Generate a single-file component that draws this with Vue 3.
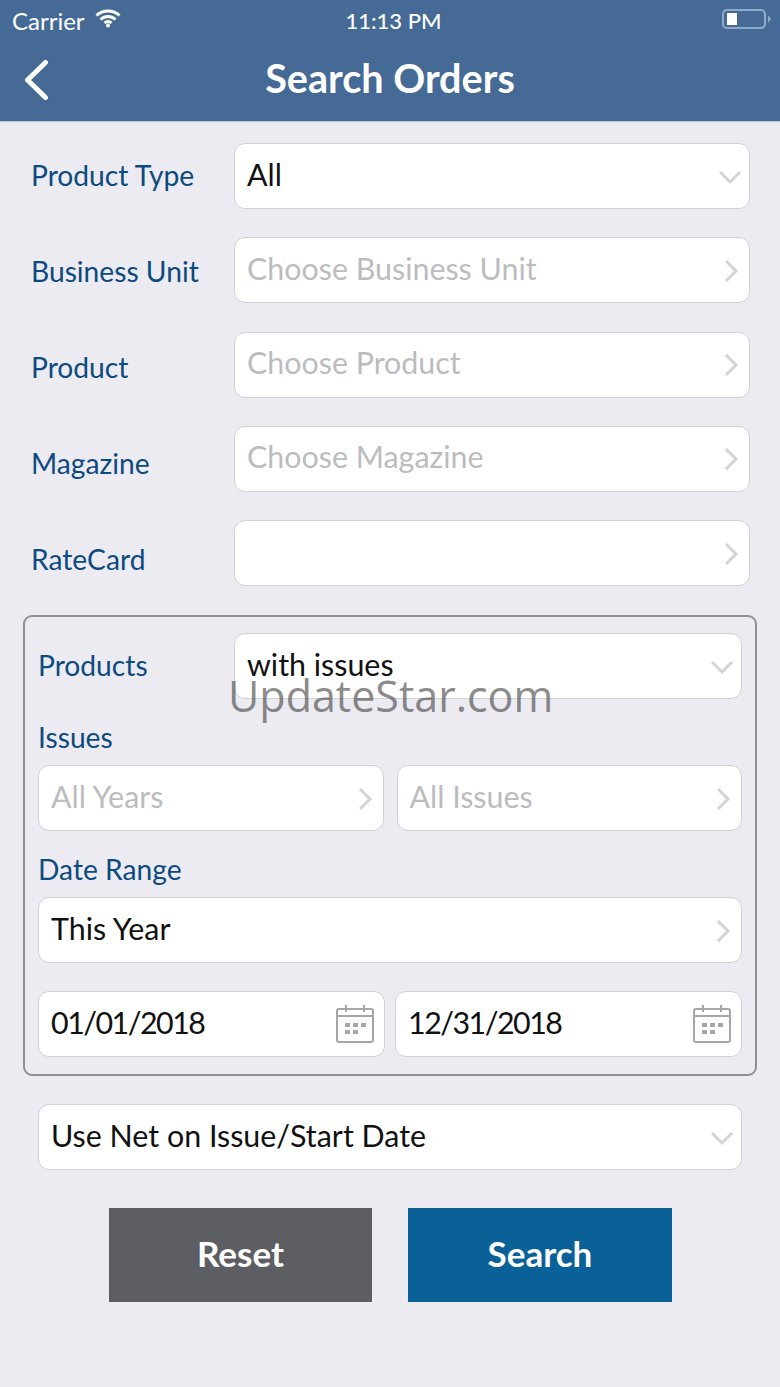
<template>
  <div class="page">
    <header class="top">
      <div class="status">
        <div class="status-left">
          <span>Carrier</span>
          <svg width="26" height="20" viewBox="0 0 26 20" class="wifi">
            <path d="M1.5 7.5C7.8 1.5 18.2 1.5 24.5 7.5" />
            <path d="M5.5 11.5C9.8 7.5 16.2 7.5 20.5 11.5" />
            <path d="M9.5 15C11.6 13.2 14.4 13.2 16.5 15" />
            <circle cx="13" cy="17.5" r="2" />
          </svg>
        </div>
        <div class="clock">11:13 PM</div>
        <div class="battery">
          <div class="battery-body"><div class="battery-fill"></div></div>
          <div class="battery-tip"></div>
        </div>
      </div>
      <div class="nav">
        <svg class="back" width="26" height="40" viewBox="0 0 26 40">
          <path d="M22.5 2.5L4.5 20L22.5 37.5" />
        </svg>
        <h1>Search Orders</h1>
      </div>
    </header>

    <main class="form">
      <section class="upper">
        <div class="labels">
          <label v-for="r in topRows" :key="r.label">{{ r.label }}</label>
        </div>
        <div class="fields">
          <div v-for="r in topRows" :key="r.label" class="field">
            <span :class="{ ph: r.placeholder }">{{ r.text }}</span>
            <svg v-if="r.icon === 'down'" class="ico down" viewBox="0 0 24 16"><path d="M2 3L12 13L22 3" /></svg>
            <svg v-else class="ico right" viewBox="0 0 16 24"><path d="M3 2L13 12L3 22" /></svg>
          </div>
        </div>
      </section>

      <section class="box">
        <div class="products-row">
          <label>Products</label>
          <div class="field grow">
            <span>with issues</span>
            <svg class="ico down" viewBox="0 0 24 16"><path d="M2 3L12 13L22 3" /></svg>
          </div>
        </div>

        <label class="sub issues-label">Issues</label>
        <div class="two">
          <div v-for="t in issues" :key="t" class="field">
            <span class="ph">{{ t }}</span>
            <svg class="ico right" viewBox="0 0 16 24"><path d="M3 2L13 12L3 22" /></svg>
          </div>
        </div>

        <label class="sub range-label">Date Range</label>
        <div class="field">
          <span>This Year</span>
          <svg class="ico right" viewBox="0 0 16 24"><path d="M3 2L13 12L3 22" /></svg>
        </div>

        <div class="dates">
          <div v-for="d in dates" :key="d" class="field">
            <span class="date-text">{{ d }}</span>
            <svg class="cal" width="38" height="40" viewBox="0 0 38 40">
              <rect x="1" y="5" width="36" height="33" rx="2" />
              <path d="M1 12H37M10 1V8M28 1V8" />
              <g class="dots">
                <rect x="9" y="19" width="5" height="4" />
                <rect x="17" y="19" width="5" height="4" />
                <rect x="25" y="19" width="5" height="4" />
                <rect x="9" y="26" width="5" height="4" />
                <rect x="17" y="26" width="5" height="4" />
              </g>
            </svg>
          </div>
        </div>
      </section>

      <div class="field net">
        <span>Use Net on Issue/Start Date</span>
        <svg class="ico down" viewBox="0 0 24 16"><path d="M2 3L12 13L22 3" /></svg>
      </div>

      <div class="buttons">
        <button class="btn reset">Reset</button>
        <button class="btn search">Search</button>
      </div>
    </main>

    <div class="watermark">UpdateStar.com</div>
  </div>
</template>

<script setup>
const topRows = [
  { label: 'Product Type', text: 'All', icon: 'down' },
  { label: 'Business Unit', text: 'Choose Business Unit', placeholder: true },
  { label: 'Product', text: 'Choose Product', placeholder: true },
  { label: 'Magazine', text: 'Choose Magazine', placeholder: true },
  { label: 'RateCard', text: '' }
]

const issues = ['All Years', 'All Issues']
const dates = ['01/01/2018', '12/31/2018']
</script>

<style>
html, body { margin: 0; background: #ebebf1; }
</style>

<style scoped>
.page {
  position: relative;
  width: 780px;
  height: 1387px;
  overflow: hidden;
  background: #ebebf1;
  font-family: Lato, "Open Sans", sans-serif;
}

.top {
  height: 122px;
  box-sizing: border-box;
  background: #456a96;
  border-bottom: 1px solid #b9cbe0;
  color: #fff;
}
.status {
  position: relative;
  height: 40px;
  display: flex;
  align-items: center;
  justify-content: space-between;
  padding: 0 9px 0 12px;
  font-size: 24px;
}
.status-left { display: flex; align-items: center; gap: 10px; }
.wifi { margin-top: -4px; }
.wifi path { fill: none; stroke: #fff; stroke-width: 3; }
.wifi circle { fill: #fff; }
.clock {
  position: absolute;
  left: 0;
  right: 0;
  text-align: center;
  font-size: 22px;
  font-weight: 500;
  padding-left: 7px;
}
.battery { display: flex; align-items: center; gap: 2px; margin-top: -2px; }
.battery-body {
  width: 44px;
  height: 20px;
  box-sizing: border-box;
  border: 2px solid #8fa9c8;
  border-radius: 5px;
  padding: 2px 3px;
}
.battery-fill { width: 10px; height: 12px; background: #fff; }
.battery-tip {
  width: 0;
  height: 0;
  border-left: 3px solid #8fa9c8;
  border-top: 4px solid transparent;
  border-bottom: 4px solid transparent;
}

.nav {
  position: relative;
  height: 80px;
  display: flex;
  align-items: center;
  justify-content: center;
}
.nav h1 {
  margin: 0 0 6px 0;
  font-size: 39.6px;
  font-weight: 700;
}
.back {
  position: absolute;
  left: 23px;
  top: 20px;
}
.back path { fill: none; stroke: #fff; stroke-width: 5; stroke-linecap: round; stroke-linejoin: round; }

.form { padding-top: 21px; }

.upper { display: flex; padding: 0 30px; }
.labels {
  width: 204px;
  display: flex;
  flex-direction: column;
  gap: 30px;
}
.labels label { height: 66px; display: flex; align-items: center; padding: 0 0 2px 1px; box-sizing: border-box; }
label { font-size: 28.2px; color: #0d4a80; }
.fields {
  flex: 1;
  display: flex;
  flex-direction: column;
  gap: 28.25px;
}

.field {
  height: 66px;
  box-sizing: border-box;
  display: flex;
  align-items: center;
  justify-content: space-between;
  padding: 0 7px 5px 12px;
  background: #fff;
  border: 1px solid #d2d2d6;
  border-radius: 11px;
  font-size: 30.4px;
  color: #111;
  min-width: 0;
}
.ph { color: #bcbcc0; }
.grow { flex: 1; }
.date-text { letter-spacing: -1.5px; }

.ico { fill: none; stroke: #d4d4d8; stroke-width: 3; flex: none; }
.ico.down { width: 24px; height: 16px; margin-top: 6px; }
.ico.right { width: 16px; height: 24px; margin: 6px 3px 0 auto; }

.box {
  margin: 22px 23px 0 23px;
  height: 461px;
  box-sizing: border-box;
  padding: 16px 13px 0 13px;
  border: 2px solid #8f8f94;
  border-radius: 9px;
}
.products-row { display: flex; }
.products-row label {
  width: 196px;
  display: flex;
  align-items: center;
  padding-bottom: 2px;
}
.sub { display: block; line-height: 36px; }
.issues-label { margin-top: 20px; }
.range-label { margin-top: 20px; margin-bottom: 10px; }

.two, .dates { display: flex; }
.two { margin-top: 10px; gap: 13px; }
.two .field { flex: 1; }
.dates { margin-top: 28px; gap: 10px; }
.dates .field { flex: 1; padding-right: 10px; }

.cal { margin-top: 4px; }
.cal rect, .cal path { fill: none; stroke: #a6a6a8; stroke-width: 2; }
.cal .dots rect { fill: #a6a6a8; stroke: none; }

.net { margin: 28px 38px 0; }

.buttons {
  display: flex;
  justify-content: center;
  gap: 36px;
  margin-top: 38px;
  padding-left: 1px;
}
.btn {
  width: 264px;
  height: 94px;
  border: none;
  color: #fff;
  font-family: inherit;
  font-size: 35px;
  font-weight: 700;
  padding: 0 0 4px;
}
.reset { background: #5d5e64; width: 263px; }
.search { background: #0a6198; }

.watermark {
  position: absolute;
  left: 228px;
  top: 667px;
  font-family: "Open Sans", sans-serif;
  font-size: 43px;
  line-height: 58px;
  color: rgba(80, 80, 80, 0.68);
  white-space: nowrap;
}
</style>
